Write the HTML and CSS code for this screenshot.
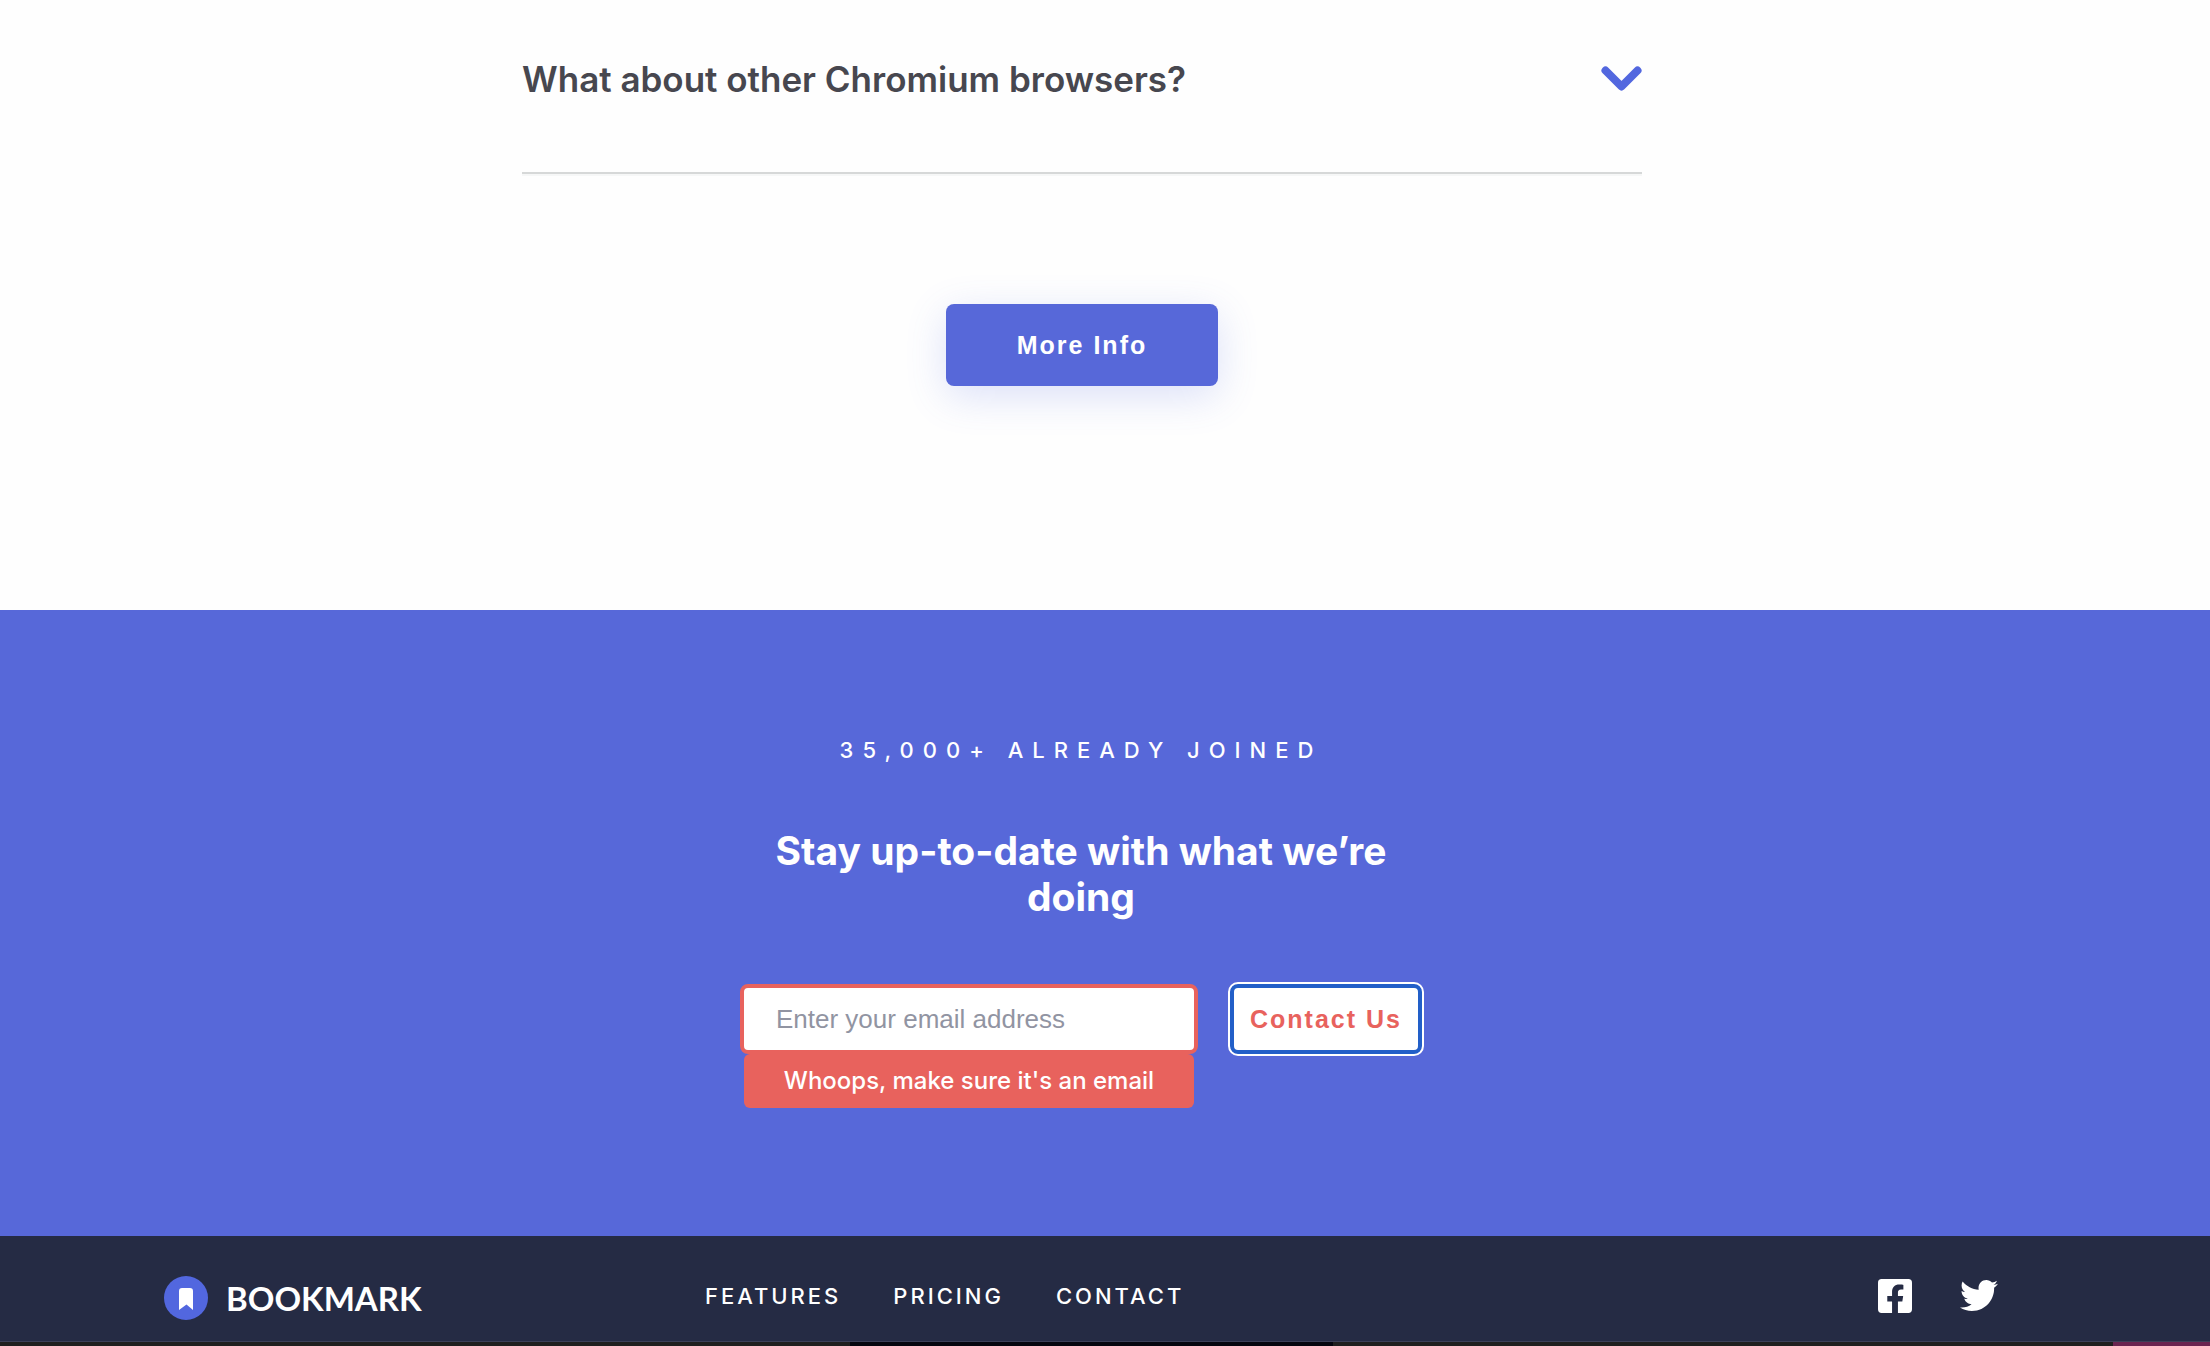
FILE: index.html
```html
<!DOCTYPE html>
<html lang="en">
<head>
<meta charset="utf-8">
<meta name="viewport" content="width=device-width, initial-scale=1">
<title>Bookmark</title>
<link rel="stylesheet" href="styles.css">
</head>
<body>
<main>
  <section class="faq">
    <div class="faq-list">
      <button class="faq-question" type="button" aria-expanded="false">
        <span>What about other Chromium browsers?</span>
        <svg class="chevron" viewBox="0 0 41 26" aria-hidden="true"><path d="M4.500 4.500 L20.500 20.500 L36.500 4.500"/></svg>
      </button>
      <hr class="divider">
    </div>
    <button class="more-button" type="button">More Info</button>
  </section>
  <section class="newsletter">
    <p class="joined">35,000+ already joined</p>
    <h2 class="headline">Stay up-to-date with what we’re doing</h2>
    <form class="signup" novalidate>
      <div class="field">
        <input class="email" id="email" type="email" aria-label="Email address" aria-describedby="email-error" placeholder="Enter your email address">
        <p class="error" id="email-error">Whoops, make sure it's an email</p>
      </div>
      <button class="contact-button" type="button">Contact Us</button>
    </form>
  </section>
</main>
<footer class="footer">
  <a class="brand" href="#">
    <svg class="brand-mark" viewBox="0 0 44 44" aria-hidden="true"><circle cx="22" cy="22" r="22" fill="#5267df"/><path d="M18 12h8a3 3 0 0 1 3 3v19l-6.500-5.500L15 34V15a3 3 0 0 1 3-3z" fill="#fff"/></svg>
    <span>BOOKMARK</span>
  </a>
  <nav class="links">
    <a href="#">Features</a>
    <a href="#">Pricing</a>
    <a href="#">Contact</a>
  </nav>
  <div class="social">
    <a href="#" aria-label="Facebook"><svg class="facebook" viewBox="0 32 448 448" aria-hidden="true"><path d="M400 32H48A48 48 0 0 0 0 80v352a48 48 0 0 0 48 48h137.250V327.690h-63V256h63v-54.640c0-62.150 37-96.480 93.670-96.480 27.140 0 55.520 4.840 55.520 4.840v61h-31.270c-30.810 0-40.420 19.120-40.420 38.730V256h68.780l-11 71.690h-57.780V480H400a48 48 0 0 0 48-48V80a48 48 0 0 0-48-48z"/></svg></a>
    <a href="#" aria-label="Twitter"><svg class="twitter" viewBox="0 48 512 416" aria-hidden="true"><path d="M459.370 151.716c.325 4.548.325 9.097.325 13.645 0 138.720-105.583 298.558-298.558 298.558-59.452 0-114.680-17.219-161.137-47.106 8.447.974 16.568 1.299 25.340 1.299 49.055 0 94.213-16.568 130.274-44.832-46.132-.975-84.792-31.188-98.112-72.772 6.498.974 12.995 1.624 19.818 1.624 9.421 0 18.843-1.300 27.614-3.573-48.081-9.747-84.143-51.980-84.143-102.985v-1.299c13.969 7.797 30.214 12.670 47.431 13.319-28.264-18.843-46.781-51.005-46.781-87.391 0-19.492 5.197-37.360 14.294-52.954 51.655 63.675 129.300 105.258 216.365 109.807-1.624-7.797-2.599-15.918-2.599-24.040 0-57.828 46.782-104.934 104.934-104.934 30.213 0 57.502 12.670 76.670 33.137 23.715-4.548 46.456-13.320 66.599-25.340-7.798 24.366-24.366 44.833-46.132 57.827 21.117-2.273 41.584-8.122 60.426-16.243-14.292 20.791-32.161 39.308-52.628 54.253z"/></svg></a>
  </div>
</footer>
<div class="desktop-edge" aria-hidden="true"></div>
</body>
</html>
```
FILE: styles.css
```css
* { box-sizing: border-box; margin: 0; }

body {
  background: #fefefe;
  color: #fff;
  font-family: Inter, Roboto, sans-serif;
}

button, input { font-family: "Liberation Sans", Arial, sans-serif; }
button { border: 0; cursor: pointer; }
a { color: inherit; text-decoration: none; }

.faq {
  display: flex;
  flex-direction: column;
  align-items: center;
  padding: 55px 46px 224px 0;
}
.faq-list { width: 100%; max-width: 1120px; }
.faq-question {
  display: flex;
  justify-content: space-between;
  align-items: center;
  width: 100%;
  height: 48px;
  padding: 0;
  background: none;
  color: #47474f;
  font: 600 35px/48px Inter, Roboto, sans-serif;
}
.chevron {
  width: 41px;
  fill: none;
  stroke: #5267df;
  stroke-width: 8;
  stroke-linecap: round;
  stroke-linejoin: round;
}
.divider {
  height: 4px;
  margin: 69px 0 128px;
  border: 0;
  border-top: 2px solid #d6d8d8;
  background: #f6f7f7;
}
.more-button {
  width: 272px;
  height: 82px;
  border-radius: 8px;
  background: #5768d9;
  color: #fff;
  font-size: 25px;
  font-weight: 700;
  letter-spacing: 2px;
  box-shadow: 0 10px 40px rgba(82, 103, 223, .2);
}

.newsletter {
  display: flex;
  flex-direction: column;
  align-items: center;
  padding: 126px 48px 128px 0;
  background: #5768d9;
}
.joined {
  font-size: 22px;
  font-weight: 500;
  line-height: 28px;
  letter-spacing: 9px;
  text-transform: uppercase;
}
.headline {
  max-width: 640px;
  margin: 64px 0;
  font-size: 39px;
  font-weight: 700;
  line-height: 46px;
  text-align: center;
}
.signup { display: flex; align-items: flex-start; gap: 32px; }
.field { width: 458px; }
.email {
  display: block;
  width: 100%;
  height: 70px;
  padding: 0 32px;
  border: 4px solid #e8625d;
  border-radius: 8px;
  background: #fff;
  color: #252b46;
  font-size: 26px;
}
.email::placeholder { color: #9194a2; opacity: 1; }
.error {
  margin: 0 4px;
  border-radius: 6px;
  background: #e8625d;
  font-size: 24px;
  font-weight: 500;
  line-height: 54px;
  text-align: center;
}
.contact-button {
  width: 192px;
  height: 70px;
  padding: 0;
  border: 4px solid #225fc8;
  border-radius: 8px;
  outline: 2px solid #fff;
  background: #fff;
  color: #e8625d;
  font-size: 25px;
  font-weight: 700;
  letter-spacing: 2px;
}

.footer {
  display: grid;
  grid-template-columns: 541px 1fr auto;
  align-items: center;
  height: 106px;
  padding: 14px 212px 0 164px;
  border-bottom: 1px solid #3b3f58;
  background: #252b44;
}
.brand {
  display: flex;
  align-items: center;
  gap: 18px;
  padding-top: 4px;
  font: 700 33px/44px Lato, sans-serif;
}
.brand-mark { width: 44px; height: 44px; }
.links {
  display: flex;
  gap: 52px;
  font-size: 22px;
  font-weight: 500;
  line-height: 28px;
  letter-spacing: 3px;
  text-transform: uppercase;
}
.social { display: flex; align-items: center; gap: 48px; }
.social a { display: flex; }
.social svg { fill: #fff; }
.facebook { width: 34px; height: 34px; }
.twitter { width: 38px; height: 31px; }

.desktop-edge {
  height: 4px;
  background: linear-gradient(90deg, #1f1f1f 850px, #05060f 850px 1333px, #1f1f1f 1333px 2113px, #6a2450 2113px);
}
```
